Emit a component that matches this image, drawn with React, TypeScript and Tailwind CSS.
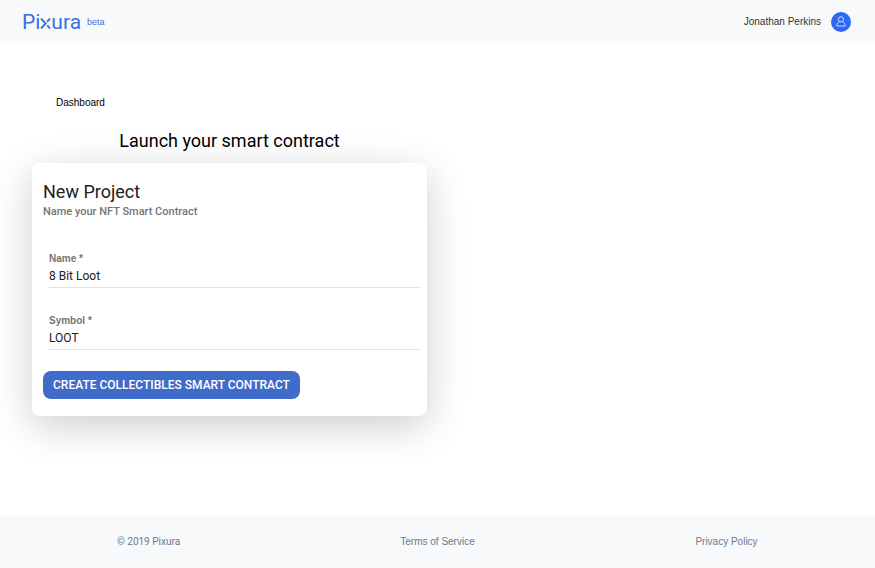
import { useId, useState } from 'react';

type FieldProps = {
    label: string;
    value: string;
    onChange: (value: string) => void;
};

function Field(props: FieldProps) {
    const id = useId();

    return (
        <div className="flex flex-col border-b border-[#e2e2e2]">
            <label htmlFor={id} className="font-['Liberation_Sans',sans-serif] text-[10px] leading-4 font-bold text-[#757575]">
                {props.label} *
            </label>
            <input
                id={id}
                type="text"
                required
                className="h-5 w-full bg-transparent pb-[3px] text-xs leading-4 text-[#212121] focus:outline-none"
                value={props.value}
                onChange={(event) => props.onChange(event.target.value)}
            />
        </div>
    );
}

function Logo() {
    return (
        <a href="#" aria-label="Pixura beta" className="flex items-center text-[#3a6fe8]">
            <span className="flex items-baseline text-[21px] leading-6">
                <span>Pi</span>
                {/* The x is a solid chevron with two loose strokes */}
                <svg viewBox="0 0 11 11" className="size-[11px]" aria-hidden="true">
                    <path
                        d="M1 0.500 L5.700 5.500 L1 10.500 M10 0.500 L7 3.800 M7.200 7.400 L10 10.500"
                        fill="none"
                        stroke="currentColor"
                        strokeWidth="1.900"
                    />
                </svg>
                <span>ura</span>
            </span>
            <span className="ml-[6px] font-['Liberation_Sans',sans-serif] text-[9px] leading-4">beta</span>
        </a>
    );
}

function UserIcon() {
    return (
        <svg viewBox="0 0 20 20" className="size-5" aria-hidden="true">
            <circle cx="10" cy="10" r="10" fill="#2f66f6" />
            <g fill="none" stroke="#dfe8ff" strokeWidth="0.900" strokeLinejoin="round">
                <circle cx="10" cy="7.300" r="2.600" />
                <path d="M8.300 10.200 C6.600 10.800 5.800 11.800 5.800 14 H14.200 C14.200 11.800 13.400 10.800 11.700 10.200" />
            </g>
        </svg>
    );
}

export default function App() {
    const [name, setName] = useState("8 Bit Loot");
    const [symbol, setSymbol] = useState("LOOT");

    return (
        <div className="flex min-h-screen flex-col bg-white font-['Roboto',sans-serif]">
            <header className="flex h-[43px] items-center justify-between bg-[#f7f9fb] pr-6 pl-[22px]">
                <Logo />
                <div className="flex items-center gap-[10px]">
                    <span className="font-['Liberation_Sans',sans-serif] text-[10px] leading-4 text-[#333]">Jonathan Perkins</span>
                    <button type="button" aria-label="Account">
                        <UserIcon />
                    </button>
                </div>
            </header>

            <main className="flex-1 px-8 pt-[52px] pb-[100px]">
                <a href="#" className="ml-6 block w-fit font-['Liberation_Sans',sans-serif] text-[10px] leading-4 text-black">Dashboard</a>
                <div className="w-[395px] max-w-full">
                    <h1 className="pt-[18px] pb-[10px] text-center text-lg leading-6 text-black">Launch your smart contract</h1>
                    <form
                        className="rounded-lg bg-white pt-[17px] pr-[6px] pb-[17px] pl-[11px] shadow-[0_10px_40px_rgba(0,0,0,0.2)]"
                        onSubmit={(event) => event.preventDefault()}
                    >
                        <h2 className="text-lg leading-6 text-[#212121]">New Project</h2>
                        <p className="text-[11px] leading-4 font-medium text-[#757575]">Name your NFT Smart Contract</p>
                        <div className="flex flex-col gap-[25px] pt-[31px] pb-[21px] pl-[6px]">
                            <Field label="Name" value={name} onChange={setName} />
                            <Field label="Symbol" value={symbol} onChange={setSymbol} />
                        </div>
                        <button type="submit" className="h-7 rounded-lg bg-[#3f6bca] px-[10px] text-xs leading-4 font-medium text-white uppercase">
                            Create Collectibles Smart Contract
                        </button>
                    </form>
                </div>
            </main>

            <footer className="grid h-[52px] grid-cols-3 items-center bg-[#f7f9fb] px-1 text-center text-[10px] leading-4 text-[#6b7a8c]">
                <span>© 2019 Pixura</span>
                <a href="#" className="font-['Liberation_Sans',sans-serif]">Terms of Service</a>
                <a href="#" className="font-['Liberation_Sans',sans-serif]">Privacy Policy</a>
            </footer>
        </div>
    );
}
